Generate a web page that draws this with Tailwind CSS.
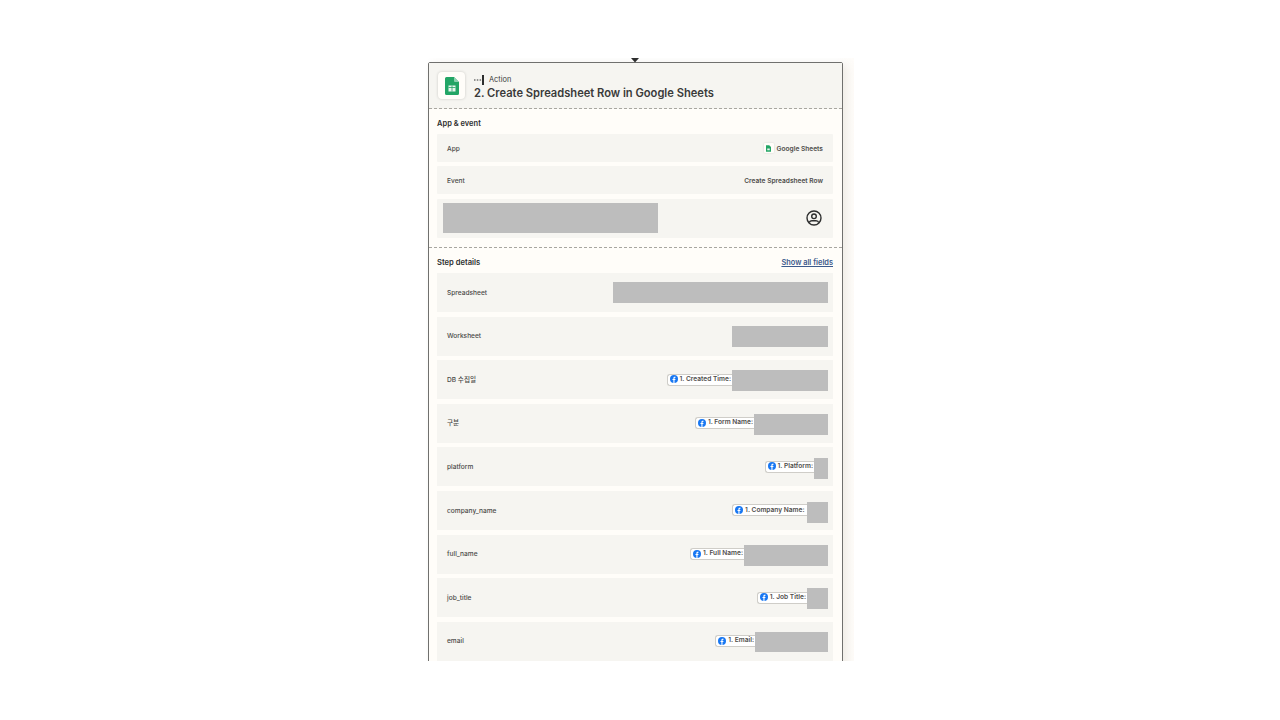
<!DOCTYPE html>
<html lang="en">
  <head>
    <meta charset="UTF-8" />
    <meta name="viewport" content="width=device-width, initial-scale=1.0" />
    <title>Create Spreadsheet Row</title>
    <script src="https://cdn.jsdelivr.net/npm/@tailwindcss/browser@4"></script>
  </head>

  <body class="bg-white h-[720px] overflow-hidden antialiased font-['Inter','Noto_Sans_CJK_KR',sans-serif]">
    <div class="w-[1280px] pt-[58px] flex flex-col items-center">
      <!-- Viewport of the step, cut off at the bottom -->
      <div class="relative w-[428px] h-[603px] overflow-hidden bg-gradient-to-r from-white from-[96%] to-[#fefcf9]">
        <svg class="absolute left-[205px] top-0" width="8" height="5" viewBox="0 0 8 5"><path d="M0 0h8L4 4.500z" fill="#2d2e2e" /></svg>

        <div class="mt-[4px] ml-[2px] w-[415px] h-[640px] bg-[#fffdf9] border border-[#70706e] rounded-t-[2px] shadow-[4px_2px_10px_rgba(120,100,60,0.12)]">
          <!-- Header -->
          <div class="h-[46px] bg-[#f6f5f1] border-b border-dashed border-[#a8a6a0] flex items-center pl-[9px] gap-[9px]">
            <div class="w-[27px] h-[27px] bg-[#fffdf9] rounded-[4px] shadow-[0_0_3px_rgba(0,0,0,0.18)] flex items-center justify-center">
              <svg width="14" height="18" viewBox="0 0 14 18">
                <path d="M1.500 0H9l5 5v11.500a1.500 1.500 0 0 1-1.500 1.500h-11A1.500 1.500 0 0 1 0 16.500v-15A1.500 1.500 0 0 1 1.500 0z" fill="#22a565" />
                <path d="M9 0l5 5H10a1 1 0 0 1-1-1z" fill="#8ed1b1" />
                <path d="M3.500 8.500h7v6h-7z" fill="#e8f5ee" />
                <path d="M3.500 10.500h7M7 8.500v6" stroke="#22a565" stroke-width="0.8" />
              </svg>
            </div>
            <div class="flex flex-col pt-[3px]">
              <div class="flex items-center gap-[5px] h-[12px]">
                <svg width="10" height="10" viewBox="0 0 10 10"><path d="M0 5h1.500M2.800 5h1.500M5.600 5h1.500" stroke="#2d2e2e" stroke-width="1" /><path d="M8 0h2v10H8z" fill="#2d2e2e" /></svg>
                <span class="text-[7.400px] leading-[12px] text-[#3b3b3a]">Action</span>
              </div>
              <div class="text-[11.150px] leading-[14px] font-semibold text-[#3a3a39]">2. Create Spreadsheet Row in Google Sheets</div>
            </div>
          </div>

          <!-- App & event -->
          <div class="pl-[8px] pr-[9px] h-[139px] border-b border-dashed border-[#a8a6a0]">
            <div class="h-[25px] pt-[9px] text-[7.500px] leading-[11px] font-semibold text-[#2d2e2e]">App &amp; event</div>
            <div class="flex flex-col">
              <div class="h-[28px] mb-[4px] pt-[3px] bg-[#f6f5f1] rounded-[1px] flex items-center justify-between px-[10px]">
                <span class="text-[6.600px] font-medium text-[#4a4a48]">App</span>
                <span class="flex items-center gap-[3px] text-[6.600px] font-semibold text-[#4f4e4c]">
                  <span class="w-[10px] h-[10px] -mt-[2px] bg-[#fffdf9] rounded-[1px] shadow-[0_0_2px_rgba(0,0,0,0.15)] flex items-center justify-center">
                    <svg width="5" height="7" viewBox="0 0 14 18"><path d="M1 0H9l5 5v13H0V0z" fill="#22a565" /><path d="M3.500 9h7v5h-7z" fill="#e8f5ee" /></svg>
                  </span>
                  Google Sheets
                </span>
              </div>
              <div class="h-[28px] mb-[5px] pt-[3px] bg-[#f6f5f1] rounded-[1px] flex items-center justify-between px-[10px]">
                <span class="text-[6.600px] font-medium text-[#4a4a48]">Event</span>
                <span class="text-[6.600px] font-semibold text-[#4f4e4c]">Create Spreadsheet Row</span>
              </div>
              <div class="h-[39px] bg-[#f6f5f1] rounded-[1px] flex items-center justify-between pl-[5.500px] pr-[11px]">
                <div class="w-[215px] h-[30px] -mt-[2px] bg-[#bdbdbd]"></div>
                <svg class="-mt-[1px]" width="16" height="16" viewBox="0 0 16 16" fill="none" stroke="#2d2e2e" stroke-width="1.400">
                  <circle cx="8" cy="8" r="7" />
                  <circle cx="8" cy="6.300" r="2.300" />
                  <path d="M3.300 12.700c.3-1.500 1.500-2 2.700-2h4c1.200 0 2.400.5 2.700 2" />
                </svg>
              </div>
            </div>
          </div>

          <!-- Step details -->
          <div class="pl-[8px] pr-[9px]">
            <div class="h-[25px] flex items-start justify-between pt-[9px]">
              <span class="text-[7.600px] leading-[11px] font-semibold text-[#2d2e2e]">Step details</span>
              <span class="text-[7.400px] leading-[11px] font-semibold text-[#3d5a8c] underline">Show all fields</span>
            </div>
            <div class="flex flex-col gap-[4.600px]">
              <div class="h-[39px] bg-[#f6f5f1] flex items-center justify-between pl-[10px] pr-[5px]">
                <span class="mt-[2px] text-[6.600px] font-medium text-[#4a4a48]">Spreadsheet</span>
                <div class="w-[215px] h-[21px] bg-[#bdbdbd]"></div>
              </div>
              <div class="h-[39px] bg-[#f6f5f1] flex items-center justify-between pl-[10px] pr-[5px]">
                <span class="mt-[2px] text-[6.600px] font-medium text-[#4a4a48]">Worksheet</span>
                <div class="w-[96px] h-[21px] bg-[#bdbdbd]"></div>
              </div>
              <div class="h-[39px] bg-[#f6f5f1] flex items-center justify-between pl-[10px] pr-[5px]">
                <span class="mt-[2px] text-[6.600px] font-medium text-[#4a4a48]">DB 수집일</span>
                <div class="flex items-center">
                  <span class="h-[12px] pl-[2px] pr-[1px] flex items-center gap-[2px] bg-white border border-r-0 border-[#cfcdc8] rounded-l-[3px] text-[6.600px] font-semibold text-[#4f4e4c]">
                    <svg class="-mt-[1px]" width="8" height="8" viewBox="0 0 8 8"><circle cx="4" cy="4" r="4" fill="#1877f2" /><path d="M3.400 8V5H2.500V3.900h.9V3.100c0-.9.5-1.400 1.300-1.400h.8v1h-.5c-.4 0-.5.2-.5.5v.7h1L5.300 5h-.8v3z" fill="#fff" /></svg>
                    1. Created Time:
                  </span>
                  <div class="w-[96px] h-[21px] mt-[2px] bg-[#bdbdbd]"></div>
                </div>
              </div>
              <div class="h-[39px] bg-[#f6f5f1] flex items-center justify-between pl-[10px] pr-[5px]">
                <span class="mt-[2px] text-[6.600px] font-medium text-[#4a4a48]">구분</span>
                <div class="flex items-center">
                  <span class="h-[12px] pl-[2px] pr-[1px] flex items-center gap-[2px] bg-white border border-r-0 border-[#cfcdc8] rounded-l-[3px] text-[6.600px] font-semibold text-[#4f4e4c]">
                    <svg class="-mt-[1px]" width="8" height="8" viewBox="0 0 8 8"><circle cx="4" cy="4" r="4" fill="#1877f2" /><path d="M3.400 8V5H2.500V3.900h.9V3.100c0-.9.5-1.400 1.300-1.400h.8v1h-.5c-.4 0-.5.2-.5.5v.7h1L5.300 5h-.8v3z" fill="#fff" /></svg>
                    1. Form Name:
                  </span>
                  <div class="w-[74px] h-[21px] mt-[2px] bg-[#bdbdbd]"></div>
                </div>
              </div>
              <div class="h-[39px] bg-[#f6f5f1] flex items-center justify-between pl-[10px] pr-[5px]">
                <span class="mt-[2px] text-[6.600px] font-medium text-[#4a4a48]">platform</span>
                <div class="flex items-center">
                  <span class="h-[12px] pl-[2px] pr-[1px] flex items-center gap-[2px] bg-white border border-r-0 border-[#cfcdc8] rounded-l-[3px] text-[6.600px] font-semibold text-[#4f4e4c]">
                    <svg class="-mt-[1px]" width="8" height="8" viewBox="0 0 8 8"><circle cx="4" cy="4" r="4" fill="#1877f2" /><path d="M3.400 8V5H2.500V3.900h.9V3.100c0-.9.5-1.400 1.300-1.400h.8v1h-.5c-.4 0-.5.2-.5.5v.7h1L5.300 5h-.8v3z" fill="#fff" /></svg>
                    1. Platform:
                  </span>
                  <div class="w-[14px] h-[21px] mt-[4px] bg-[#bdbdbd]"></div>
                </div>
              </div>
              <div class="h-[39px] bg-[#f6f5f1] flex items-center justify-between pl-[10px] pr-[5px]">
                <span class="mt-[2px] text-[6.600px] font-medium text-[#4a4a48]">company_name</span>
                <div class="flex items-center">
                  <span class="h-[12px] pl-[2px] pr-[2.500px] flex items-center gap-[2px] bg-white border border-r-0 border-[#cfcdc8] rounded-l-[3px] text-[6.600px] font-semibold text-[#4f4e4c]">
                    <svg class="-mt-[1px]" width="8" height="8" viewBox="0 0 8 8"><circle cx="4" cy="4" r="4" fill="#1877f2" /><path d="M3.400 8V5H2.500V3.900h.9V3.100c0-.9.5-1.400 1.300-1.400h.8v1h-.5c-.4 0-.5.2-.5.5v.7h1L5.300 5h-.8v3z" fill="#fff" /></svg>
                    1. Company Name:
                  </span>
                  <div class="w-[21px] h-[21px] mt-[4px] bg-[#bdbdbd]"></div>
                </div>
              </div>
              <div class="h-[39px] bg-[#f6f5f1] flex items-center justify-between pl-[10px] pr-[5px]">
                <span class="mt-[2px] text-[6.600px] font-medium text-[#4a4a48]">full_name</span>
                <div class="flex items-center">
                  <span class="h-[12px] pl-[2px] pr-[1px] flex items-center gap-[2px] bg-white border border-r-0 border-[#cfcdc8] rounded-l-[3px] text-[6.600px] font-semibold text-[#4f4e4c]">
                    <svg class="-mt-[1px]" width="8" height="8" viewBox="0 0 8 8"><circle cx="4" cy="4" r="4" fill="#1877f2" /><path d="M3.400 8V5H2.500V3.900h.9V3.100c0-.9.5-1.400 1.300-1.400h.8v1h-.5c-.4 0-.5.2-.5.5v.7h1L5.300 5h-.8v3z" fill="#fff" /></svg>
                    1. Full Name:
                  </span>
                  <div class="w-[84px] h-[21px] mt-[2px] bg-[#bdbdbd]"></div>
                </div>
              </div>
              <div class="h-[39px] bg-[#f6f5f1] flex items-center justify-between pl-[10px] pr-[5px]">
                <span class="mt-[2px] text-[6.600px] font-medium text-[#4a4a48]">job_title</span>
                <div class="flex items-center">
                  <span class="h-[12px] pl-[2px] pr-[1px] flex items-center gap-[2px] bg-white border border-r-0 border-[#cfcdc8] rounded-l-[3px] text-[6.600px] font-semibold text-[#4f4e4c]">
                    <svg class="-mt-[1px]" width="8" height="8" viewBox="0 0 8 8"><circle cx="4" cy="4" r="4" fill="#1877f2" /><path d="M3.400 8V5H2.500V3.900h.9V3.100c0-.9.5-1.400 1.300-1.400h.8v1h-.5c-.4 0-.5.2-.5.5v.7h1L5.300 5h-.8v3z" fill="#fff" /></svg>
                    1. Job Title:
                  </span>
                  <div class="w-[21px] h-[21px] mt-[2px] bg-[#bdbdbd]"></div>
                </div>
              </div>
              <div class="h-[39px] bg-[#f6f5f1] flex items-center justify-between pl-[10px] pr-[5px]">
                <span class="mt-[2px] text-[6.600px] font-medium text-[#4a4a48]">email</span>
                <div class="flex items-center">
                  <span class="h-[12px] pl-[2px] pr-[1px] flex items-center gap-[2px] bg-white border border-r-0 border-[#cfcdc8] rounded-l-[3px] text-[6.600px] font-semibold text-[#4f4e4c]">
                    <svg class="-mt-[1px]" width="8" height="8" viewBox="0 0 8 8"><circle cx="4" cy="4" r="4" fill="#1877f2" /><path d="M3.400 8V5H2.500V3.900h.9V3.100c0-.9.5-1.400 1.300-1.400h.8v1h-.5c-.4 0-.5.2-.5.5v.7h1L5.300 5h-.8v3z" fill="#fff" /></svg>
                    1. Email:
                  </span>
                  <div class="w-[73px] h-[20px] mt-[1px] bg-[#bdbdbd]"></div>
                </div>
              </div>
            </div>
          </div>
        </div>
      </div>
    </div>
  </body>
</html>
